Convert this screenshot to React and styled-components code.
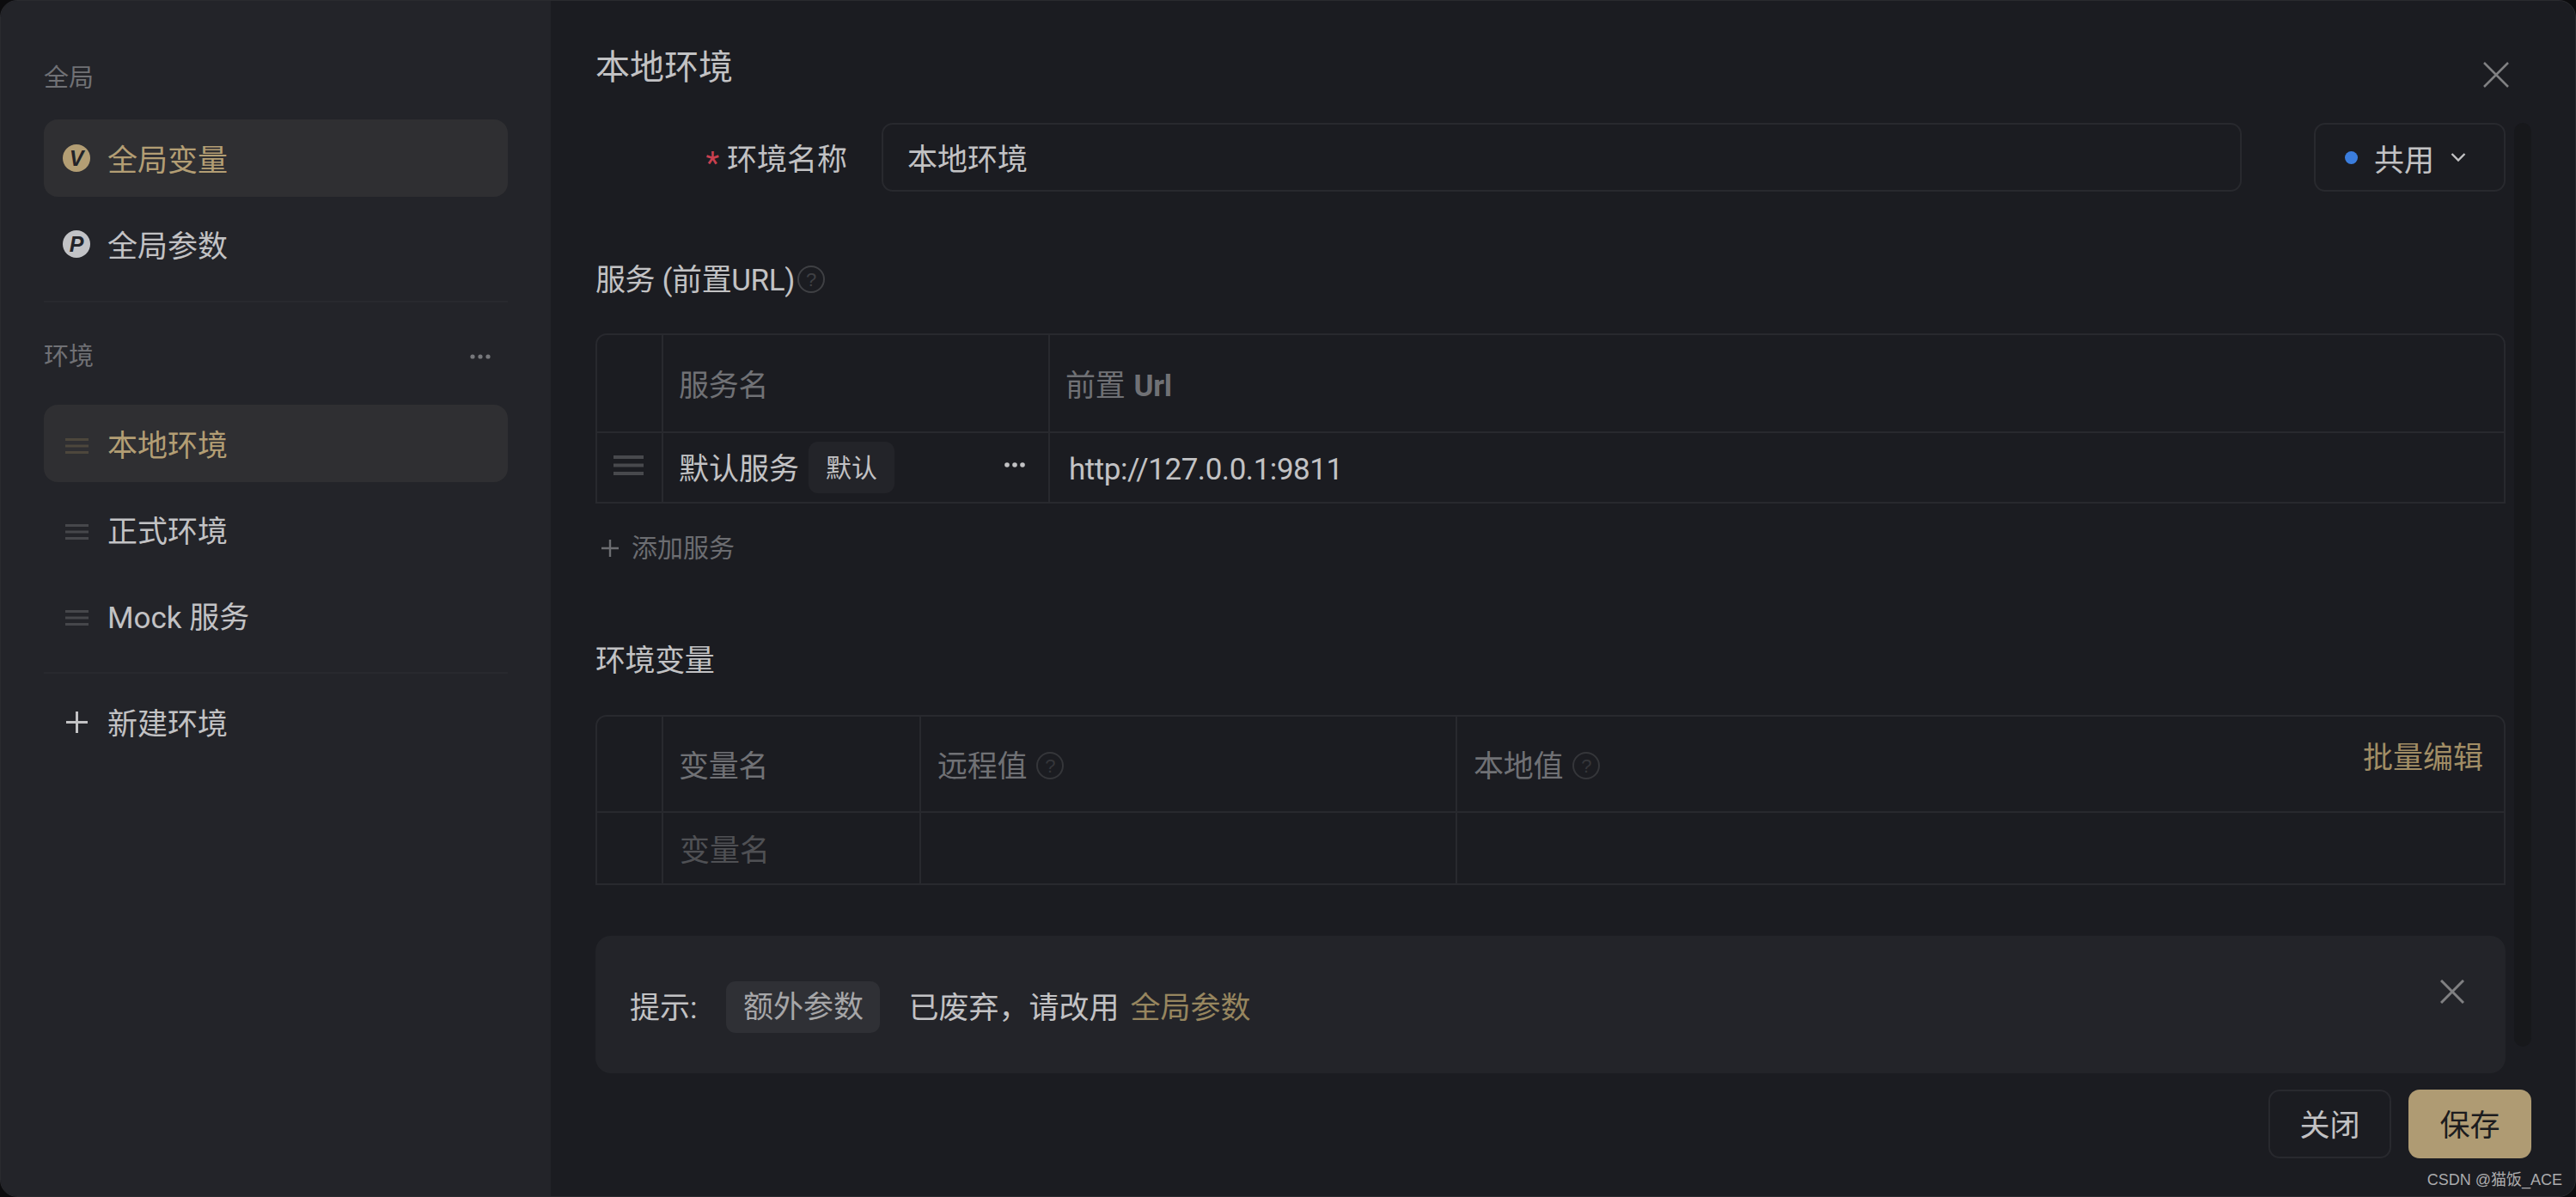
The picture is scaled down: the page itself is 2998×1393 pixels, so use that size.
import React from "react";
import styled, { createGlobalStyle } from "styled-components";

const Global = createGlobalStyle`
  html, body { margin: 0; padding: 0; background: #0c0c0e; }
  body {
    width: 2998px; height: 1393px; overflow: hidden;
    font-family: "Roboto", "Noto Sans CJK SC", sans-serif;
    font-size: 35px; color: #c2c2c4;
  }
  * { box-sizing: border-box; }
`;

const Modal = styled.div`
  position: relative; display: flex; width: 2998px; height: 1393px;
  background: #1b1c21; border-radius: 20px; overflow: hidden;
  border: 1px solid #2a2b2f;
`;
const Sidebar = styled.aside`
  width: 640px; flex: none; background: #232429; padding: 68px 50px 0;
  display: flex; flex-direction: column;
`;
const GroupLabel = styled.div`
  display: flex; justify-content: space-between; align-items: center;
  height: 40px; font-size: 29px; line-height: 40px; color: #707175;
  margin-bottom: ${p => p.$mb}px; padding-top: 4px;
`;
const NavList = styled.div`display: flex; flex-direction: column; gap: 10px;`;
const NavItem = styled.div`
  display: flex; align-items: center; gap: 20px; height: 90px; padding-left: 22px;
  border-radius: 16px; line-height: 50px; font-size: 35px;
  background: ${p => (p.$active ? "#2f2f32" : "transparent")};
  color: ${p => (p.$active ? "#b39e74" : "#c2c2c4")};
`;
const NavText = styled.span`padding-top: 8px;`;
const IconSlot = styled.span`
  width: 32px; height: 32px; flex: none; display: flex; align-items: center; justify-content: center;
  padding-top: ${p => p.$pt || 0}px;
`;
const Badge = styled.span`
  width: 32px; height: 32px; border-radius: 50%; display: flex; align-items: center; justify-content: center;
  background: ${p => p.$bg}; color: #222328; font: italic 700 25px/32px "Liberation Sans", sans-serif;
`;
const Divider = styled.div`
  height: 2px; background: #28292e; margin: ${p => p.$m};
`;
const Main = styled.main`
  flex: 1; min-width: 0; position: relative; display: flex; flex-direction: column;
  padding: 0 51px 0 52px;
`;
const Header = styled.header`
  height: 142px; flex: none; display: flex; justify-content: space-between; align-items: flex-start;
  padding-top: 58px; padding-right: 26px;
`;
const Title = styled.h1`
  margin: 0; font-size: 40px; line-height: 40px; font-weight: 400; color: #c2c2c4;
`;
const CloseBtn = styled.span`display: flex; color: #808082; margin-top: 13px;`;
const Body = styled.div`
  width: 2223px; height: 1125px; flex: none;
`;
const Thumb = styled.div`
  position: absolute; left: 2285px; top: 142px; width: 20px; height: 1075px;
  background: #17181b; border-radius: 10px;
`;
const NameRow = styled.div`display: flex; align-items: center; height: 80px;`;
const FieldLabel = styled.label`
  width: 293px; flex: none; display: flex; justify-content: flex-end; align-items: center;
  gap: 9px; margin-right: 40px; line-height: 50px; padding-top: 7px;
`;
const Required = styled.span`color: #c9404f; font-size: 36px; line-height: 36px; padding-top: 6px;`;
const NameInput = styled.div`
  flex: 1; height: 80px; border: 2px solid #28292e; border-radius: 13px; padding: 7px 0 0 28px;
  display: flex; align-items: center; line-height: 50px;
`;
const ScopeSelect = styled.div`
  width: 223px; flex: none; height: 80px; margin-left: 84px; border: 2px solid #28292e; border-radius: 13px;
  padding-left: 34px; display: flex; align-items: center; gap: 19px;
`;
const Dot = styled.span`width: 15px; height: 15px; border-radius: 50%; background: #3b7ddd; flex: none;`;
const SectionTitle = styled.h2`
  margin: ${p => p.$m}; display: flex; align-items: center; height: 50px; font-size: 35px; font-weight: 400;
  line-height: 50px; color: #c2c2c4; letter-spacing: -0.4px; padding-top: 4px;
`;
const Help = styled.span`
  width: 32px; height: 32px; border-radius: 50%; flex: none; margin: -4px 0 0 ${p => p.$ml}px;
  border: 2.5px solid ${p => p.$c}; color: ${p => p.$c};
  display: flex; align-items: center; justify-content: center;
  font: 400 22px/27px "Liberation Sans", sans-serif;
`;
const Frame = styled.div`
  position: relative; border: 2px solid #28292e; border-bottom: 0; border-radius: 13px 13px 0 0;
`;
const Row = styled.div`
  display: grid; grid-template-columns: ${p => p.$cols}; height: ${p => p.$h}px;
  border-bottom: 2px solid #28292e;
`;
const Cell = styled.div`
  display: flex; align-items: center; min-width: 0;
  padding: ${p => p.$pt || 0}px 0 0 ${p => p.$pl || 0}px;
  border-right: ${p => (p.$last ? "0" : "2px solid #28292e")};
  line-height: 50px; color: ${p => p.$c || "#c2c2c4"};
`;
const HeadCell = styled(Cell)`color: #707175; letter-spacing: -0.3px;`;
const CellText = styled.span`padding-top: 6px;`;
const UrlText = styled(CellText)`letter-spacing: -0.45px;`;
const Strong = styled.b`font-weight: 700; margin-left: 10px;`;
const Handle = styled.span`display: flex; margin: -6px 0 0 ${p => p.$ml}px; color: #44454a;`;
const Tag = styled.span`
  display: flex; align-items: center; justify-content: center; flex: none; height: 60px;
  width: ${p => p.$w}px; margin: ${p => p.$m}; background: ${p => p.$bg}; color: ${p => p.$c};
  border-radius: 11px; font-size: ${p => p.$fs}px; line-height: 60px; padding-top: 2px;
`;
const More = styled.span`display: flex; margin-left: auto; margin-right: 27px; color: #c2c2c4; margin-top: -6px;`;
const AddLink = styled.div`
  display: flex; align-items: center; gap: 15px; height: 40px; margin: 32px 0 0 7px;
  font-size: 30px; line-height: 40px; color: #6c6d71;
`;
const BatchEdit = styled.span`
  position: absolute; right: 24px; top: 29px; line-height: 40px; font-size: 35px; color: #a18d65;
`;
const Notice = styled.div`
  display: flex; align-items: flex-start; height: 160px; margin-top: 59px; padding: 53px 48px 0 40px;
  background: #232429; border-radius: 18px;
`;
const NoticeText = styled.span`line-height: 60px; padding-top: 2px; white-space: nowrap; margin-right: ${p => p.$mr}px; color: ${p => p.$c || "#c2c2c4"};`;
const NoticeClose = styled.span`display: flex; margin-left: auto; margin-top: -2px; color: #808082;`;
const Footer = styled.footer`
  display: flex; justify-content: flex-end; gap: 20px; height: 80px; flex: none;
`;
const Button = styled.div`
  width: 143px; height: 80px; border-radius: 13px; display: flex; align-items: center; justify-content: center;
  font-size: 35px; line-height: 50px; padding-top: 5px;
  border: ${p => (p.$primary ? "0" : "2px solid #28292e")};
  background: ${p => (p.$primary ? "#af9b73" : "transparent")};
  color: ${p => (p.$primary ? "#1c1c1e" : "#c2c2c4")};
`;
const Watermark = styled.span`
  position: absolute; right: 15px; bottom: 7px; font: 400 18px/24px "Liberation Sans", "Noto Sans CJK SC", sans-serif;
  color: #ababad;
`;

const Bars = ({ w, h, t, color }) => (
  <svg width={w} height={h} viewBox={`0 0 ${w} ${h}`}>
    <rect y="0" width={w} height={t} fill={color} />
    <rect y={(h - t) / 2} width={w} height={t} fill={color} />
    <rect y={h - t} width={w} height={t} fill={color} />
  </svg>
);
const Dots = ({ color = "currentColor", r = 2.8 }) => (
  <svg width="24" height="8" viewBox="0 0 24 8">
    <circle cx="3" cy="4" r={r} fill={color} />
    <circle cx="12" cy="4" r={r} fill={color} />
    <circle cx="21" cy="4" r={r} fill={color} />
  </svg>
);
const Cross = ({ s, sw }) => (
  <svg width={s} height={s} viewBox={`0 0 ${s} ${s}`}>
    <path d={`M1 1L${s - 1} ${s - 1}M${s - 1} 1L1 ${s - 1}`} stroke="currentColor" strokeWidth={sw} fill="none" />
  </svg>
);
const PlusIcon = ({ s, sw, color }) => (
  <svg width={s} height={s} viewBox={`0 0 ${s} ${s}`}>
    <path d={`M${s / 2} 0V${s}M0 ${s / 2}H${s}`} stroke={color} strokeWidth={sw} fill="none" />
  </svg>
);
const Chevron = () => (
  <svg width="18" height="12" viewBox="0 0 18 12">
    <path d="M1.5 2L9 9.5L16.5 2" stroke="#c2c2c4" strokeWidth="2.4" fill="none" />
  </svg>
);
const MoreWrap = styled.span`display: flex; margin-right: 20px;`;

const SVC_COLS = "77px 450px 1fr";
const VAR_COLS = "77px 300px 624px 1fr";

export default function App() {
  return (
    <>
      <Global />
      <Modal>
        <Sidebar>
          <GroupLabel $mb={30}>全局</GroupLabel>
          <NavList>
            <NavItem $active>
              <IconSlot><Badge $bg="#b39e74">V</Badge></IconSlot><NavText>全局变量</NavText>
            </NavItem>
            <NavItem>
              <IconSlot><Badge $bg="#c2c3c6">P</Badge></IconSlot><NavText>全局参数</NavText>
            </NavItem>
          </NavList>
          <Divider $m="21px 0 41px" />
          <GroupLabel $mb={38}>
            环境
            <MoreWrap><Dots color="#77787c" r={2.6} /></MoreWrap>
          </GroupLabel>
          <NavList>
            <NavItem $active>
              <IconSlot $pt={5}><Bars w={27} h={18} t={3} color="#4d473c" /></IconSlot><NavText>本地环境</NavText>
            </NavItem>
            <NavItem>
              <IconSlot $pt={5}><Bars w={27} h={18} t={3} color="#46474b" /></IconSlot><NavText>正式环境</NavText>
            </NavItem>
            <NavItem>
              <IconSlot $pt={5}><Bars w={27} h={18} t={3} color="#46474b" /></IconSlot><NavText>Mock 服务</NavText>
            </NavItem>
          </NavList>
          <Divider $m="21px 0 11px" />
          <NavItem>
            <IconSlot><PlusIcon s={25} sw={3} color="#c2c2c4" /></IconSlot><NavText>新建环境</NavText>
          </NavItem>
        </Sidebar>
        <Main>
          <Header>
            <Title>本地环境</Title>
            <CloseBtn><Cross s={30} sw={2.5} /></CloseBtn>
          </Header>
          <Thumb />
          <Body>
            <NameRow>
              <FieldLabel><Required>*</Required>环境名称</FieldLabel>
              <NameInput>本地环境</NameInput>
              <ScopeSelect><Dot />共用<Chevron /></ScopeSelect>
            </NameRow>
            <SectionTitle $m="77px 0 38px">服务 (前置URL)<Help $ml={3} $c="#3f4044">?</Help></SectionTitle>
            <Frame>
              <Row $cols={SVC_COLS} $h={114}>
                <HeadCell />
                <HeadCell $pl={18} $pt={8}>服务名</HeadCell>
                <HeadCell $pl={18} $pt={8} $last>前置<Strong>Url</Strong></HeadCell>
              </Row>
              <Row $cols={SVC_COLS} $h={82}>
                <Cell><Handle $ml={19}><Bars w={35} h={23} t={4} color="#48494d" /></Handle></Cell>
                <Cell $pl={18}>
                  <CellText>默认服务</CellText>
                  <Tag $w={100} $m="0 0 0 11px" $bg="#232429" $c="#c2c2c4" $fs={30}>默认</Tag>
                  <More><Dots /></More>
                </Cell>
                <Cell $pl={22} $last><UrlText>http://127.0.0.1:9811</UrlText></Cell>
              </Row>
            </Frame>
            <AddLink><PlusIcon s={20} sw={2.4} color="#6c6d71" />添加服务</AddLink>
            <SectionTitle $m="85px 0 39px">环境变量</SectionTitle>
            <Frame>
              <Row $cols={VAR_COLS} $h={112}>
                <HeadCell />
                <HeadCell $pl={18} $pt={8}>变量名</HeadCell>
                <HeadCell $pl={19} $pt={8}>远程值<Help $ml={11} $c="#35363a">?</Help></HeadCell>
                <HeadCell $pl={19} $pt={8} $last>本地值<Help $ml={11} $c="#35363a">?</Help></HeadCell>
              </Row>
              <Row $cols={VAR_COLS} $h={84}>
                <Cell />
                <Cell $pl={19} $pt={7} $c="#4f5054">变量名</Cell>
                <Cell />
                <Cell $last />
              </Row>
              <BatchEdit>批量编辑</BatchEdit>
            </Frame>
            <Notice>
              <NoticeText $mr={34}>提示:</NoticeText>
              <Tag $w={179} $m="0 33px 0 0" $bg="#2f3035" $c="#a6a6a8" $fs={35}>额外参数</Tag>
              <NoticeText $mr={13}>已废弃，请改用</NoticeText>
              <NoticeText $c="#97865f">全局参数</NoticeText>
              <NoticeClose><Cross s={28} sw={3} /></NoticeClose>
            </Notice>
          </Body>
          <Footer>
            <Button>关闭</Button>
            <Button $primary>保存</Button>
          </Footer>
        </Main>
        <Watermark>CSDN @猫饭_ACE</Watermark>
      </Modal>
    </>
  );
}
